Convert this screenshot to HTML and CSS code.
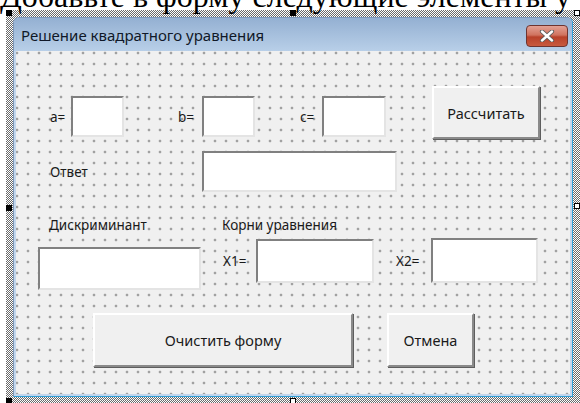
FILE: index.html
```html
<!DOCTYPE html>
<html lang="ru">
<head>
  <meta charset="UTF-8" />
  <title>Решение квадратного уравнения</title>
  <link rel="stylesheet" href="styles.css">
</head>
<body>
  <div class="intro">Добавьте в форму следующие элементы у</div>
  <div class="selection">
    <span class="handle dark tl"></span>
    <span class="handle dark tm"></span>
    <span class="handle light tr"></span>
    <span class="handle dark ml"></span>
    <span class="handle light mr"></span>
    <span class="handle dark bl"></span>
    <span class="handle light bm"></span>

    <div class="window">
      <div class="titlebar">
        <span class="title">Решение квадратного уравнения</span>
        <span class="close">
          <svg width="16" height="12" viewBox="0 0 16 12">
            <path d="M3 1.5 L13 10.5 M13 1.5 L3 10.5" stroke="#5b5b5b" stroke-width="4.2" stroke-linecap="round" />
            <path d="M3 1.5 L13 10.5 M13 1.5 L3 10.5" stroke="#fff" stroke-width="2.4" stroke-linecap="round" />
          </svg>
        </span>
      </div>

      <div class="client">
        <div class="row row-coef">
          <div class="field">
            <span class="lbl w-a">a=</span>
            <span class="tb tb-a"></span>
          </div>
          <div class="field gap-b">
            <span class="lbl w-b">b=</span>
            <span class="tb tb-a"></span>
          </div>
          <div class="field gap-c">
            <span class="lbl w-c">c=</span>
            <span class="tb tb-c"></span>
          </div>
          <button class="btn btn-calc">Рассчитать</button>
        </div>

        <div class="row row-answer">
          <span class="lbl w-answer">Ответ</span>
          <span class="tb tb-answer"></span>
        </div>

        <div class="row row-roots">
          <div class="col col-disc">
            <span class="lbl lbl-disc">Дискриминант</span>
            <span class="tb tb-disc"></span>
          </div>
          <div class="col col-roots">
            <span class="lbl lbl-roots">Корни уравнения</span>
            <div class="roots">
              <span class="lbl w-x1">X1=</span>
              <span class="tb tb-x1"></span>
              <span class="lbl w-x2">X2=</span>
              <span class="tb tb-x2"></span>
            </div>
          </div>
        </div>

        <div class="row row-buttons">
          <button class="btn btn-clear">Очистить форму</button>
          <button class="btn btn-cancel">Отмена</button>
        </div>
      </div>
    </div>
  </div>
</body>
</html>
```

FILE: styles.css
```css
body {
  margin: 0;
  background: #fff;
  width: 580px;
  height: 403px;
  overflow: hidden;
}
.intro {
  font-family: 'Liberation Serif', serif;
  font-size: 32px;
  line-height: 32px;
  height: 30px;
  margin-top: -20px;
  white-space: nowrap;
  color: #000;
  position: relative;
  z-index: 2;
}

/* designer selection frame */
.selection {
  position: relative;
  box-sizing: border-box;
  margin-left: 6px;
  width: 574px;
  height: 393px;
  padding: 7px 7px 0 7px;
  background: repeating-conic-gradient(#6a6a6a 0 25%, #fff 0 50%) 0 0 / 2px 2px;
}
.handle {
  position: absolute;
  width: 6px;
  height: 6px;
  box-sizing: border-box;
  z-index: 3;
}
.handle.dark { background: #000; }
.handle.light { background: #fff; border: 1px solid #000; }
.tl { left: 0; top: 0; }
.tm { left: 284px; top: 0; }
.tr { right: 0; top: 0; }
.ml { left: 0; top: 195px; }
.mr { right: 0; top: 193px; }
.bl { left: 0; top: 388px; }
.bm { left: 284px; top: 388px; }

/* form window */
.window {
  box-sizing: border-box;
  height: 380px;
  border: 1px solid #7d97b8;
  border-right-color: #2f9fd6;
  border-bottom-color: #2f9fd6;
  border-radius: 6px 6px 0 0;
  padding: 0 2px 2px;
  background: #c3d6ec;
  font-family: 'Noto Sans', sans-serif;
  color: #1a1a1a;
}
.titlebar {
  height: 33px;
  display: flex;
  align-items: center;
  justify-content: space-between;
  padding: 0 2px 0 7px;
  background: linear-gradient(#94b0d2, #b8cfe8);
  border-radius: 5px 5px 0 0;
  margin: 0 -2px;
}
.title {
  font-size: 15px;
  color: #101828;
}
.close {
  display: flex;
  align-items: center;
  justify-content: center;
  width: 42px;
  height: 22px;
  box-sizing: border-box;
  border: 1px solid #6e3430;
  border-radius: 4px;
  background: linear-gradient(#e3a195 0%, #d0735f 45%, #b8412a 55%, #c85a3f 100%);
  margin-top: 2px;
  margin-right: 2px;
}

/* dotted design grid */
.client {
  height: 343px;
  overflow: hidden;
  background-color: #f0f0f0;
  background-image: radial-gradient(circle, #333 0.8px, transparent 1.1px);
  background-size: 11px 11px;
  background-position: -4.5px -3.5px;
  padding-top: 35px;
  box-sizing: border-box;
  font-size: 13.5px;
}
.row {
  display: flex;
}
.field {
  display: flex;
  align-items: center;
  margin-bottom: 2px;
}
.lbl {
  white-space: nowrap;
}
.tb {
  display: block;
  box-sizing: border-box;
  background: #fff;
  border: 2px solid #e4e4e4;
  border-top-color: #808080;
  border-left-color: #808080;
}
.btn {
  box-sizing: border-box;
  font: inherit;
  font-size: 14.5px;
  color: #1a1a1a;
  background: #f0f0f0;
  border: 2px solid #fff;
  border-right-color: #8a8a8a;
  border-bottom-color: #8a8a8a;
  box-shadow: 1px 1px 0 #5e5e5e;
  padding: 0;
}

.row-coef {
  align-items: flex-end;
  padding-left: 34px;
}
.w-a { width: 21px; }
.w-b { width: 24px; }
.w-c { width: 22px; }
.gap-b { margin-left: 54px; }
.gap-c { margin-left: 45px; }
.tb-a { width: 53px; height: 41px; }
.tb-c { width: 64px; height: 41px; }
.btn-calc { width: 108px; height: 53px; margin-left: 46px; }

.row-answer {
  align-items: center;
  margin-top: 12px;
  padding-left: 34px;
}
.w-answer { width: 152px; }
.tb-answer { width: 195px; height: 41px; }

.row-roots {
  margin-top: 24px;
  padding-left: 22px;
}
.col {
  display: flex;
  flex-direction: column;
}
.lbl-disc {
  line-height: 18px;
  padding-left: 11px;
  margin-bottom: 13px;
}
.tb-disc { width: 163px; height: 43px; }
.col-roots { margin-left: 21px; }
.lbl-roots { line-height: 18px; }
.roots {
  display: flex;
  align-items: center;
  margin-top: 4px;
}
.w-x1 { width: 34px; padding-left: 1px; box-sizing: border-box; }
.tb-x1 { width: 118px; height: 44px; }
.w-x2 { width: 35px; margin-left: 22px; }
.tb-x2 { width: 107px; height: 45px; }

.row-buttons {
  margin-top: 23px;
  padding-left: 77px;
}
.btn-clear { width: 260px; height: 54px; }
.btn-cancel { width: 87px; height: 54px; margin-left: 34px; }
```
